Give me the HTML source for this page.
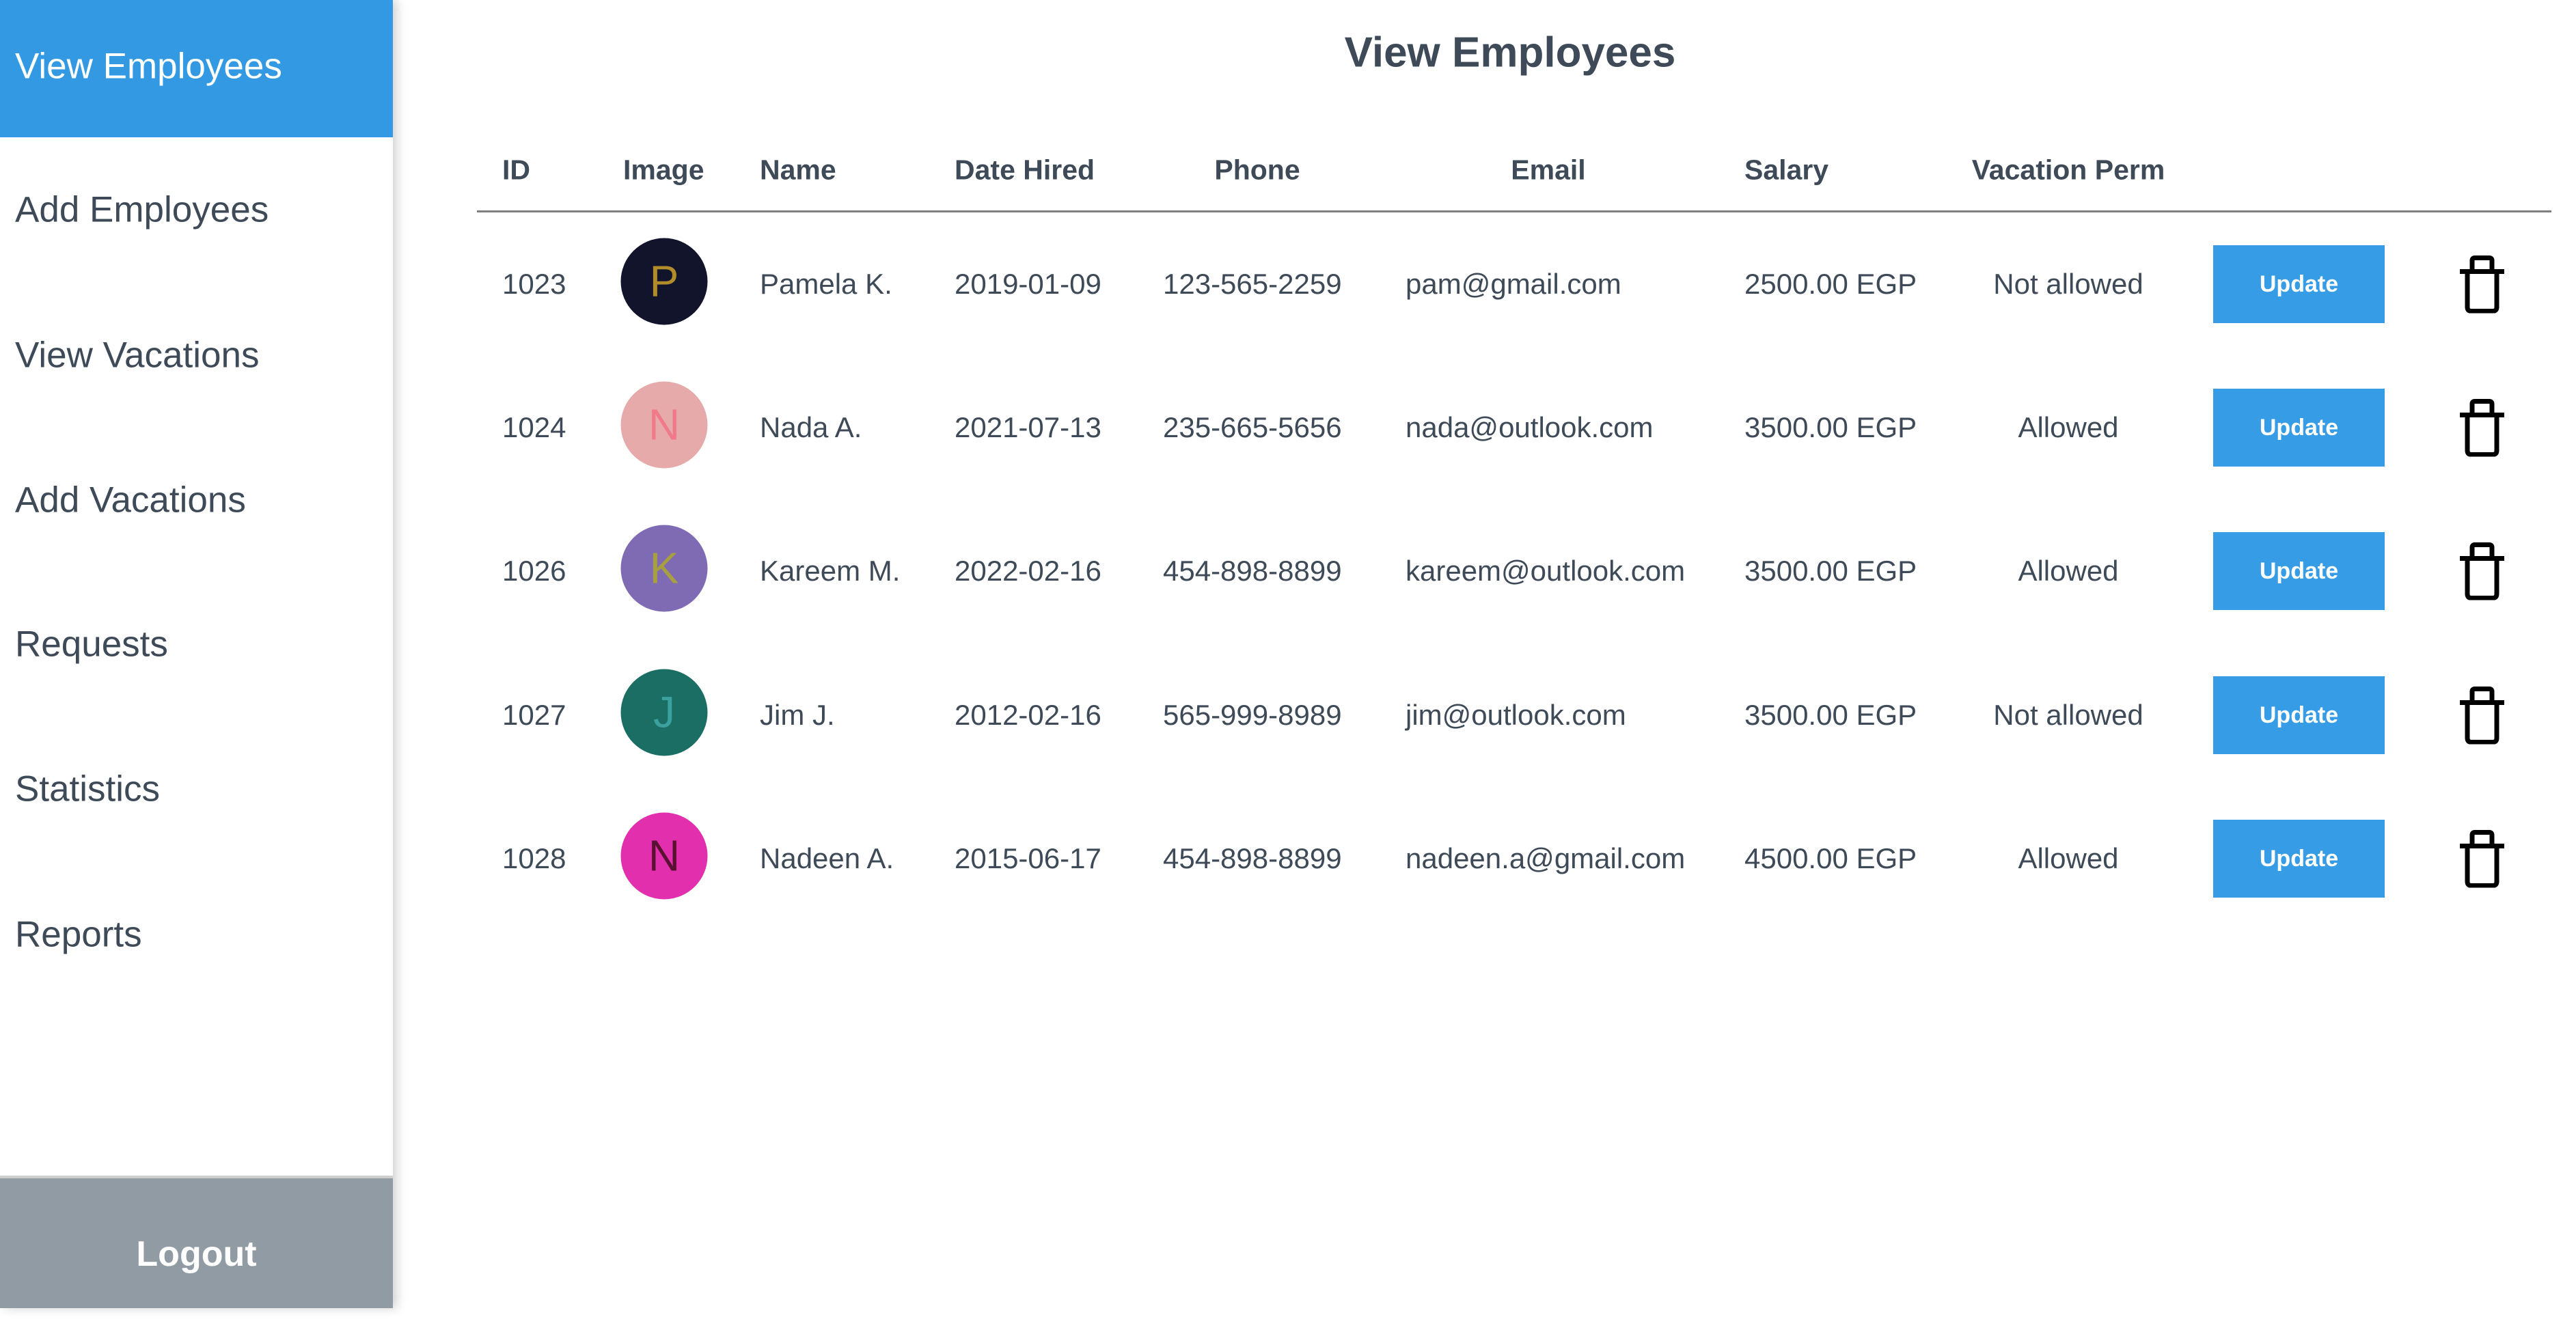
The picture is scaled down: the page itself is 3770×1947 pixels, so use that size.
<!DOCTYPE html>
<html><head><meta charset="utf-8"><style>
*{margin:0;padding:0;box-sizing:border-box}
body{width:3770px;height:1915px;background:#fff;font-family:"Liberation Sans",sans-serif;color:#3e4a57;position:relative;overflow:hidden}
.side{position:absolute;left:0;top:0;width:575px;height:1915px;background:#fff;box-shadow:6px 0 14px rgba(0,0,0,0.18);z-index:2}
.nav{position:absolute;left:22px;font-size:53px;transform:translateY(-50%);white-space:nowrap}
.active{position:absolute;left:0;top:0;width:575px;height:201px;background:#3499e3}
.logout{position:absolute;left:0;top:1721px;width:575px;height:194px;background:#919ba4;border-top:4px solid #cfcfcf;color:#fff;font-weight:bold;font-size:52px;text-align:center;line-height:222px}
.t{position:absolute;white-space:nowrap;transform:translateY(-50%);font-size:42px}
.h{font-weight:bold;font-size:41px}
.c{transform:translate(-50%,-50%)}
.av{position:absolute;width:127px;height:127px;border-radius:50%;transform:translate(-50%,-50%);text-align:center;line-height:127px;font-size:64px}
.btn{position:absolute;left:3239px;width:251px;height:114px;background:#369ce6;color:#fff;font-weight:bold;font-size:34px;text-align:center;line-height:114px;transform:translateY(-50%)}
.tr{position:absolute;left:3600px;width:65px;height:85px;transform:translateY(-50%)}
</style></head><body>
<div class="side">
<div class="active"></div>
<div class="nav" style="top:97px;color:#fff">View Employees</div>
<div class="nav" style="top:307px">Add Employees</div>
<div class="nav" style="top:520px">View Vacations</div>
<div class="nav" style="top:732px">Add Vacations</div>
<div class="nav" style="top:943px">Requests</div>
<div class="nav" style="top:1155px">Statistics</div>
<div class="nav" style="top:1368px">Reports</div>
<div class="logout">Logout</div>
</div>
<div class="t c" style="left:2210px;top:77px;font-size:62px;font-weight:bold">View Employees</div>
<div class="t h" style="left:735px;top:249px">ID</div>
<div class="t h" style="left:912px;top:249px">Image</div>
<div class="t h" style="left:1112px;top:249px">Name</div>
<div class="t h" style="left:1397px;top:249px">Date Hired</div>
<div class="t h c" style="left:1840px;top:249px">Phone</div>
<div class="t h c" style="left:2266px;top:249px">Email</div>
<div class="t h" style="left:2553px;top:249px">Salary</div>
<div class="t h c" style="left:3027px;top:249px">Vacation Perm</div>
<div style="position:absolute;left:698px;top:308px;width:3036px;height:3px;background:#808080"></div>

<div class="t" style="left:735px;top:416px">1023</div>
<div class="av" style="left:972px;top:412px;background:#12142c;color:#b08d2a">P</div>
<div class="t" style="left:1112px;top:416px">Pamela K.</div>
<div class="t" style="left:1397px;top:416px">2019-01-09</div>
<div class="t" style="left:1702px;top:416px">123-565-2259</div>
<div class="t" style="left:2057px;top:416px">pam@gmail.com</div>
<div class="t" style="left:2553px;top:416px">2500.00 EGP</div>
<div class="t c" style="left:3027px;top:416px">Not allowed</div>
<div class="btn" style="top:416px">Update</div>

<div class="t" style="left:735px;top:626px">1024</div>
<div class="av" style="left:972px;top:622px;background:#e6aaab;color:#f07a8a">N</div>
<div class="t" style="left:1112px;top:626px">Nada A.</div>
<div class="t" style="left:1397px;top:626px">2021-07-13</div>
<div class="t" style="left:1702px;top:626px">235-665-5656</div>
<div class="t" style="left:2057px;top:626px">nada@outlook.com</div>
<div class="t" style="left:2553px;top:626px">3500.00 EGP</div>
<div class="t c" style="left:3027px;top:626px">Allowed</div>
<div class="btn" style="top:626px">Update</div>

<div class="t" style="left:735px;top:836px">1026</div>
<div class="av" style="left:972px;top:832px;background:#7f6bb3;color:#a8a040">K</div>
<div class="t" style="left:1112px;top:836px">Kareem M.</div>
<div class="t" style="left:1397px;top:836px">2022-02-16</div>
<div class="t" style="left:1702px;top:836px">454-898-8899</div>
<div class="t" style="left:2057px;top:836px">kareem@outlook.com</div>
<div class="t" style="left:2553px;top:836px">3500.00 EGP</div>
<div class="t c" style="left:3027px;top:836px">Allowed</div>
<div class="btn" style="top:836px">Update</div>

<div class="t" style="left:735px;top:1047px">1027</div>
<div class="av" style="left:972px;top:1043px;background:#1a6e63;color:#3aa0a0">J</div>
<div class="t" style="left:1112px;top:1047px">Jim J.</div>
<div class="t" style="left:1397px;top:1047px">2012-02-16</div>
<div class="t" style="left:1702px;top:1047px">565-999-8989</div>
<div class="t" style="left:2057px;top:1047px">jim@outlook.com</div>
<div class="t" style="left:2553px;top:1047px">3500.00 EGP</div>
<div class="t c" style="left:3027px;top:1047px">Not allowed</div>
<div class="btn" style="top:1047px">Update</div>

<div class="t" style="left:735px;top:1257px">1028</div>
<div class="av" style="left:972px;top:1253px;background:#e22fae;color:#5a1030">N</div>
<div class="t" style="left:1112px;top:1257px">Nadeen A.</div>
<div class="t" style="left:1397px;top:1257px">2015-06-17</div>
<div class="t" style="left:1702px;top:1257px">454-898-8899</div>
<div class="t" style="left:2057px;top:1257px">nadeen.a@gmail.com</div>
<div class="t" style="left:2553px;top:1257px">4500.00 EGP</div>
<div class="t c" style="left:3027px;top:1257px">Allowed</div>
<div class="btn" style="top:1257px">Update</div>

<svg class="tr" style="top:416px" viewBox="0 0 65 85"><path d="M18 22V8q0-4 4-4h21q4 0 4 4v14M0 24H65M11 24V76q0 6 6 6H48q6 0 6-6V24" fill="none" stroke="#000" stroke-width="7"/></svg>
<svg class="tr" style="top:626px" viewBox="0 0 65 85"><path d="M18 22V8q0-4 4-4h21q4 0 4 4v14M0 24H65M11 24V76q0 6 6 6H48q6 0 6-6V24" fill="none" stroke="#000" stroke-width="7"/></svg>
<svg class="tr" style="top:836px" viewBox="0 0 65 85"><path d="M18 22V8q0-4 4-4h21q4 0 4 4v14M0 24H65M11 24V76q0 6 6 6H48q6 0 6-6V24" fill="none" stroke="#000" stroke-width="7"/></svg>
<svg class="tr" style="top:1047px" viewBox="0 0 65 85"><path d="M18 22V8q0-4 4-4h21q4 0 4 4v14M0 24H65M11 24V76q0 6 6 6H48q6 0 6-6V24" fill="none" stroke="#000" stroke-width="7"/></svg>
<svg class="tr" style="top:1257px" viewBox="0 0 65 85"><path d="M18 22V8q0-4 4-4h21q4 0 4 4v14M0 24H65M11 24V76q0 6 6 6H48q6 0 6-6V24" fill="none" stroke="#000" stroke-width="7"/></svg>
</body></html>
